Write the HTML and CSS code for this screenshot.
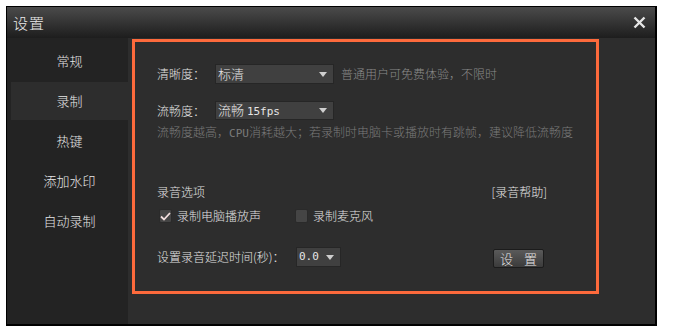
FILE: index.html
```html
<!DOCTYPE html>
<html lang="zh-CN">
<head>
    <meta charset="UTF-8">
    <meta name="viewport" content="width=device-width, initial-scale=1.0">
    <title>设置</title>
    <link rel="stylesheet" href="styles.css">
</head>
<body>
    <div class="window">
        <div class="titlebar">
            <span class="title">设置</span>
            <svg class="close" width="13" height="13" viewBox="0 0 13 13">
                <path d="M1.5 1.5 L11.5 11.5 M11.5 1.5 L1.5 11.5" stroke="#e6e6e6" stroke-width="2.4" fill="none"/>
            </svg>
        </div>
        <div class="main">
            <ul class="sidebar">
                <li>常规</li>
                <li class="active">录制</li>
                <li>热键</li>
                <li>添加水印</li>
                <li>自动录制</li>
            </ul>
            <div class="content">
                <div class="panel">
                    <div class="row row-quality">
                        <span class="label">清晰度：</span>
                        <div class="select select-wide">
                            <span>标清</span>
                            <i class="arrow"></i>
                        </div>
                        <span class="hint">普通用户可免费体验，不限时</span>
                    </div>

                    <div class="row row-fps">
                        <span class="label">流畅度：</span>
                        <div class="select select-wide">
                            <span>流畅 <span class="mono">15fps</span></span>
                            <i class="arrow"></i>
                        </div>
                    </div>
                    <p class="note">流畅度越高，<span class="mono">CPU</span>消耗越大；若录制时电脑卡或播放时有跳帧，建议降低流畅度</p>

                    <div class="row row-audio">
                        <span>录音选项</span>
                        <span class="help">[录音帮助]</span>
                    </div>

                    <div class="row row-checks">
                        <label class="check-item first">
                            <span class="checkbox checked">
                                <svg width="11" height="9" viewBox="0 0 11 9">
                                    <path d="M1 4.5 L4 7.5 L10 1" stroke="#f2dede" stroke-width="1.8" fill="none"/>
                                </svg>
                            </span>
                            录制电脑播放声
                        </label>
                        <label class="check-item">
                            <span class="checkbox"></span>
                            录制麦克风
                        </label>
                    </div>

                    <div class="row row-delay">
                        <span class="delay-label">设置录音延迟时间(秒)：</span>
                        <div class="select select-small">
                            <span class="mono">0.0</span>
                            <i class="arrow"></i>
                        </div>
                        <button class="btn">设 置</button>
                    </div>
                </div>
            </div>
        </div>
    </div>
</body>
</html>
```

FILE: styles.css
```css
html, body {
    margin: 0;
    padding: 0;
    background: #fff;
}

body {
    padding: 6px 0 0 6px;
    font-family: "Noto Sans CJK SC", "Noto Sans", sans-serif;
    font-size: 12px;
    font-weight: 300;
    line-height: 14px;
    color: #e2e2e2;
}

.window {
    width: 651px;
    height: 320px;
    box-sizing: border-box;
    border: 1px solid #000;
    border-right-width: 2px;
    border-bottom-width: 2px;
    display: flex;
    flex-direction: column;
    background: #2d2d2d;
}

.titlebar {
    height: 31px;
    flex-shrink: 0;
    display: flex;
    align-items: center;
    justify-content: space-between;
    padding: 0 9px 0 6px;
    background: linear-gradient(to bottom, #4b4b4b, #1d1d1d);
}

.title {
    font-size: 15px;
    color: #ececec;
    letter-spacing: 1px;
}

.close {
    display: block;
}

.main {
    flex: 1;
    display: flex;
}

.sidebar {
    width: 121px;
    margin: 0;
    padding: 4px 0 0;
    list-style: none;
    background: #232323;
    display: flex;
    flex-direction: column;
    gap: 2px;
}

.sidebar li {
    height: 38px;
    margin-left: 4px;
    display: flex;
    align-items: center;
    justify-content: center;
    font-size: 13px;
    color: #e6e6e6;
}

.sidebar li.active {
    background: #2d2d2d;
}

.content {
    flex: 1;
    padding: 1px 0 0 4px;
}

.panel {
    width: 467px;
    height: 255px;
    box-sizing: border-box;
    border: 3px solid #fd6a3c;
    padding: 22px 49px 0 22px;
}

.row {
    display: flex;
    align-items: center;
}

.label {
    width: 58px;
}

.select {
    height: 20px;
    box-sizing: border-box;
    border: 1px solid #262626;
    background: #404040;
    display: flex;
    align-items: center;
    justify-content: space-between;
    padding: 0 6px 0 2px;
    color: #e6e6e6;
}

.select-wide {
    width: 119px;
    font-size: 13px;
}

.select-small {
    width: 45px;
}

.arrow {
    width: 0;
    height: 0;
    border-left: 4.5px solid transparent;
    border-right: 4.5px solid transparent;
    border-top: 5px solid #cfcfcf;
}

.select-small .arrow {
    border-left-width: 4px;
    border-right-width: 4px;
}

.mono {
    font-family: "DejaVu Sans Mono", monospace;
    font-size: 11px;
}

.hint {
    margin-left: 7px;
    color: #8a8a8a;
}

.row-fps {
    margin-top: 17px;
}

.row-fps .select {
    height: 19px;
}

.note {
    margin: 5px 0 0;
    color: #7b7b7b;
    white-space: nowrap;
}

.row-audio {
    margin-top: 44px;
    justify-content: space-between;
}

.help {
    color: #e6e6e6;
}

.row-checks {
    margin-top: 10px;
    padding-left: 2px;
}

.check-item {
    display: flex;
    align-items: center;
    gap: 5px;
}

.check-item.first {
    width: 136px;
}

.checkbox {
    width: 13px;
    height: 14px;
    box-sizing: border-box;
    border: 1px solid #2a2a2a;
    border-radius: 2px;
    background: #454545;
    display: flex;
    align-items: center;
    justify-content: center;
}

.row-delay {
    margin-top: 23px;
}

.delay-label {
    width: 139px;
}

.btn {
    margin-left: auto;
    margin-right: 3px;
    margin-top: 3px;
    width: 51px;
    height: 19px;
    padding: 0;
    border: 1px solid #1c1c1c;
    border-radius: 2px;
    background: linear-gradient(to bottom, #5a5a5a, #3b3b3b);
    color: #e8e8e8;
    font-family: inherit;
    font-size: 13px;
    font-weight: 300;
    line-height: 17px;
    letter-spacing: 4px;
    text-indent: 4px;
}
```
